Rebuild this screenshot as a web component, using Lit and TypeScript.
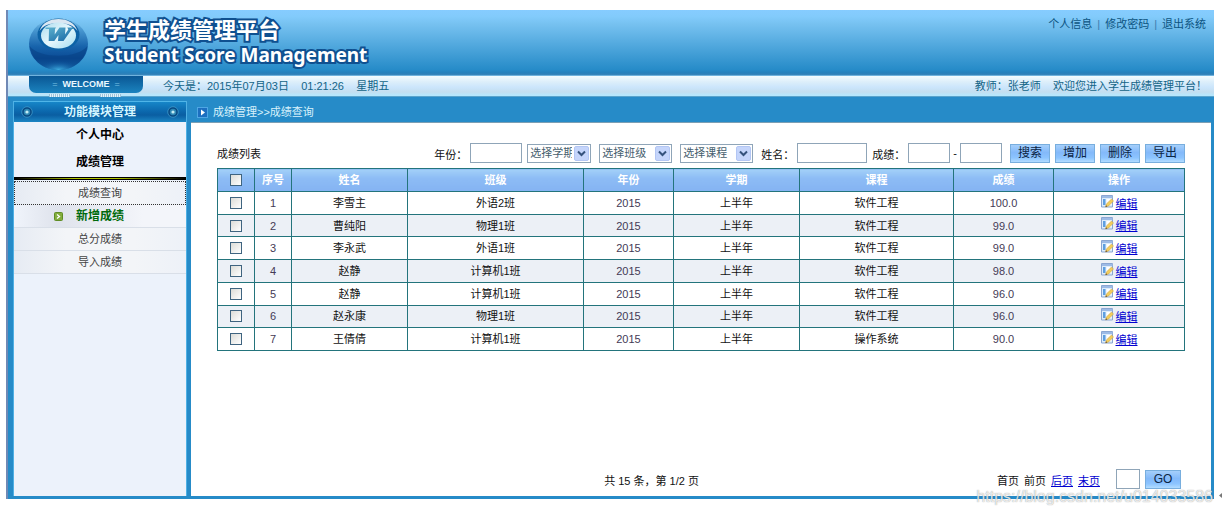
import { LitElement, html, css } from "lit";
import { customElement } from "lit/decorators.js";
import { classMap } from "lit/directives/class-map.js";

interface Score {
  name: string;
  group: string;
  course: string;
  score: string;
}

const SCORES: Score[] = [
  { name: "李雪主", group: "外语2班", course: "软件工程", score: "100.0" },
  { name: "曹纯阳", group: "物理1班", course: "软件工程", score: "99.0" },
  { name: "李永武", group: "外语1班", course: "软件工程", score: "99.0" },
  { name: "赵静", group: "计算机1班", course: "软件工程", score: "98.0" },
  { name: "赵静", group: "计算机1班", course: "软件工程", score: "96.0" },
  { name: "赵永康", group: "物理1班", course: "软件工程", score: "96.0" },
  { name: "王倩倩", group: "计算机1班", course: "操作系统", score: "90.0" },
];

const COLUMNS = ["序号", "姓名", "班级", "年份", "学期", "课程", "成绩", "操作"];

const logo = html`<svg class="logo" viewBox="0 0 60 54" aria-hidden="true">
  <defs>
    <linearGradient id="ball" x1="0" y1="0" x2="0" y2="1">
      <stop offset="0" stop-color="#8ccdf2" />
      <stop offset="0.2" stop-color="#4d9cd4" />
      <stop offset="0.55" stop-color="#1763ab" />
      <stop offset="0.78" stop-color="#0a4a94" />
      <stop offset="1" stop-color="#1f7fc2" />
    </linearGradient>
    <linearGradient id="face" x1="0" y1="0" x2="1" y2="1">
      <stop offset="0" stop-color="#a9dbee" />
      <stop offset="0.5" stop-color="#e8f8fd" />
      <stop offset="1" stop-color="#9fdcf0" />
    </linearGradient>
    <linearGradient id="letter" x1="0" y1="0" x2="1" y2="1">
      <stop offset="0" stop-color="#5fb4cf" />
      <stop offset="1" stop-color="#1464a4" />
    </linearGradient>
    <radialGradient id="glow" cx="0.5" cy="1" r="0.6">
      <stop offset="0" stop-color="#3fb0e2" />
      <stop offset="1" stop-color="#0b4f99" stop-opacity="0" />
    </radialGradient>
  </defs>
  <ellipse cx="30" cy="27" rx="29.5" ry="26" fill="url(#ball)" />
  <path d="M1 29c10 13 48 13 58 0-3 15-14 24-29 24S4 44 1 29z" fill="#083f84" opacity=".55" />
  <ellipse cx="30" cy="45" rx="18" ry="8" fill="url(#glow)" />
  <ellipse cx="30" cy="17.5" rx="21" ry="16" fill="#0c62a6" />
  <path d="M11 14C14 5 22 2 30 2s16 3 19 12C45 8 38 6 30 6s-15 2-19 8z" fill="#fff" opacity=".85" />
  <ellipse cx="30" cy="18.500" rx="17.500" ry="13" fill="url(#face)" />
  <path d="M17 10.500h10.500l-1 1.500-.3 5.500 4.800-7h6l-.5 7 3.300-5-1-2h7l-1 1.500h-1.300l-8.500 12h-5.500l.5-6-4.200 6h-5.600l.3-12h-3.500z" fill="url(#letter)" />
</svg>`;

const rivet = html`<svg class="rivet" viewBox="0 0 12 12" aria-hidden="true">
  <circle cx="6" cy="6" r="5.300" fill="#084a84" stroke="#3f9bcc" stroke-width=".8" />
  <circle cx="6" cy="6" r="3.200" fill="#2f88b4" />
  <circle cx="6" cy="6" r="1.600" fill="#c4ecf4" />
</svg>`;

const editIcon = html`<svg class="edit-icon" viewBox="0 0 13 13" aria-hidden="true">
  <path d="M.5 .5h11v11.500H.5z" fill="#dcecfb" stroke="#8aa6d2" />
  <path d="M1 1h10.500v2H1z" fill="#9dbbe6" />
  <path d="M2 4h2.500v6H2z" fill="#5f9fe0" />
  <path d="M5.500 4h5v6h-5z" fill="#fff" />
  <path d="M4.500 12l.8-3L10.500 4l2 2-5 5z" fill="#f3cd5c" stroke="#c79a3c" stroke-width=".5" />
  <path d="M4.500 12l.6-1.800 1.200 1.200z" fill="#5a4634" />
</svg>`;

@customElement("app-root")
export class AppRoot extends LitElement {
  static styles = css`
    :host {
      box-sizing: border-box;
      min-height: 100vh;
      padding: 10px 8px 16px 6px;
      background: #fff;
      color: #111;
      font: 11px/16px "Liberation Sans", "Noto Sans CJK SC", sans-serif;
      display: flex;
      flex-direction: column;
      position: relative;
    }
    * { box-sizing: border-box; }
    a { color: inherit; text-decoration: none; }
    .frame {
      flex: 1;
      display: flex;
      flex-direction: column;
      border-left: 2px solid #7089b5;
      background: #268bc8;
    }
    .banner {
      height: 65px;
      display: flex;
      padding: 6px 8px 0 20px;
      background: linear-gradient(#86ccff 0, #82cbfb 10%, #76c1f0 22%, #268bc8 92%, #2680bb 97%, #3b86ba);
    }
    .logo { width: 61px; height: 54px; margin-top: 1px; }
    .titles { flex: 1; margin: 4px 0 0 15px; color: #fff; }
    .titles h1, .titles p {
      margin: 0;
      font-weight: 700;
      -webkit-text-stroke: 4px #0f5090;
      paint-order: stroke fill;
      white-space: nowrap;
    }
    .titles h1 { font-size: 22px; line-height: 22px; font-family: "Liberation Sans", "Noto Sans CJK SC", sans-serif; }
    .titles p { font-size: 19px; line-height: 26px; font-family: "Noto Sans", sans-serif; }
    .account { color: #0c5482; white-space: nowrap; }
    .account span { padding: 0 5px; color: #3a7cae; }
    .welcome-bar {
      height: 22px;
      display: flex;
      align-items: flex-start;
      padding: 0 7px 0 21px;
      border-top: 1px solid #70b3de;
      border-bottom: 1px solid #5aa3cc;
      background: linear-gradient(#f4fcff, #dceefa 30%, #cce6fc 55%, #c3def0 80%, #b4e8ff);
      color: #136487;
    }
    .tab {
      width: 114px;
      height: 21px;
      margin-right: 20px;
      display: flex;
      flex-direction: column;
    }
    .tab-face {
      height: 17px;
      border-radius: 0 0 7px 7px;
      background: linear-gradient(#0a5794, #1b83bf);
      color: #eaf8ff;
      font-size: 9px;
      font-weight: 700;
      line-height: 16px;
      text-align: center;
    }
    .tab-face i { padding: 0 5px; color: #7cc3e6; font-style: normal; font-weight: 400; }
    .ticks { display: flex; justify-content: space-between; padding: 1px 22px 0 20px; }
    .ticks i { width: 21px; height: 3px; background: repeating-linear-gradient(90deg, #9ec3da 0 1px, #e4f3fb 1px 2px); }
    .today { flex: 1; padding-top: 2px; white-space: pre; }
    .greeting { padding-top: 2px; white-space: pre; }
    .body { flex: 1; display: flex; padding: 0 3px 3px 5px; gap: 4px; }
    .sidebar {
      width: 174px;
      margin-top: 4px;
      border: 1px solid #4fb0e4;
      border-width: 0 1px;
      background: #ecf2fb;
    }
    .side-title {
      height: 21px;
      display: flex;
      align-items: center;
      justify-content: space-between;
      padding: 0 7px;
      border-top: 1px solid #4fb5e8;
      background: linear-gradient(#1686c8, #0b66ab 50%, #0a5ea2 65%, #1c86c4);
      color: #d6f6ff;
      line-height: 18px;
    }
    .side-title h2 { margin: 0; font-size: 12px; }
    .rivet { width: 12px; height: 12px; }
    .side-group {
      display: block;
      height: 27px;
      color: #000;
      font-size: 12px;
      font-weight: 700;
      line-height: 27px;
      text-align: center;
    }
    .submenu {
      margin: 1px 0 0;
      padding: 4px 0 0;
      list-style: none;
      background: linear-gradient(90deg, #000, #b4c800 35%, #b4c800 60%, #000) 0 1px / 100% 1px no-repeat,
        linear-gradient(#000, #000) 0 0 / 100% 3px no-repeat;
    }
    .submenu a {
      display: flex;
      align-items: center;
      justify-content: center;
      height: 23px;
      border-bottom: 1px solid #d9dfe8;
      background: linear-gradient(90deg, #e6ebf3, #f3f5f8 30%, #f3f5f8 70%, #edf1f8);
      color: #444;
    }
    .submenu .focused { height: 24px; border: 1px dotted #333; }
    .submenu .current {
      background: linear-gradient(90deg, #f0f4fb, #dfe3ec 25%, #f3f5fa 75%);
      color: #006a0c;
      font-size: 12px;
      font-weight: 700;
    }
    .marker { width: 9px; height: 9px; margin: 1px 13px 0 -22px; }
    .content { flex: 1; min-width: 0; display: flex; flex-direction: column; }
    .crumbs { height: 25px; display: flex; align-items: center; gap: 5px; padding: 4px 0 0 6px; color: #d8f2fc; }
    .crumbs svg { width: 11px; height: 11px; margin-top: 1px; }
    .panel {
      flex: 1;
      display: flex;
      flex-direction: column;
      padding: 20px 26px 7px;
      border-top: 1px solid #7c9fb4;
      background: #fff;
    }
    .filters { display: flex; align-items: center; height: 20px; margin-bottom: 5px; white-space: nowrap; }
    .filters h3 { flex: 1; margin: 0; padding-top: 2px; font-size: 11px; font-weight: 400; }
    .fields { display: flex; align-items: center; gap: 8px; }
    .pair { display: flex; align-items: center; gap: 5px; }
    .field { display: flex; align-items: center; gap: 3px; }
    .field label { padding-top: 3px; }
    .range { display: flex; align-items: center; gap: 3px; }
    input[type="text"] {
      height: 20px;
      padding: 0 3px;
      border: 1px solid #8fa5b8;
      border-radius: 0;
      background: #fff;
      font: inherit;
      outline: 0;
    }
    .w-year { width: 52px; }
    .w-name { width: 70px; }
    .w-score { width: 42px; }
    .w-page { width: 24px; }
    .select { position: relative; display: flex; }
    select {
      appearance: none;
      width: 73px;
      height: 19px;
      padding: 0 18px 0 2px;
      border: 1px solid #8fa5b8;
      border-radius: 0;
      background: #fff;
      color: #46606e;
      font: inherit;
    }
    .short select { width: 64px; }
    .select svg { position: absolute; top: 2px; right: 2px; width: 15px; height: 15px; pointer-events: none; }
    .buttons { display: flex; gap: 5px; }
    button {
      width: 40px;
      height: 19px;
      padding: 0;
      border: 1px solid #78aede;
      background: linear-gradient(#a5cffb, #83b9fa 45%, #8cc4ff 75%, #b2dcff);
      color: #0b2544;
      font: inherit;
      font-size: 12px;
      line-height: 16px;
    }
    .go { width: 36px; }
    table { width: 100%; height: 183px; border-collapse: collapse; table-layout: fixed; }
    th, td { height: 22px; padding: 0; border: 1px solid #23747c; line-height: 16px; text-align: center; vertical-align: middle; }
    th { height: 23px; background: linear-gradient(#a3d0f8, #8dbcf5 40%, #84b3f2); color: #fff; }
    tbody tr:nth-child(even) { background: #ecf0f6; }
    .num { color: #443a55; }
    .c-tick { width: 37px; }
    .c-name { width: 116px; }
    .c-group { width: 176px; }
    .c-year { width: 90px; }
    .c-term { width: 126px; }
    .c-course { width: 154px; }
    .c-score { width: 100px; }
    .c-action { width: 131px; }
    input[type="checkbox"] {
      appearance: none;
      display: block;
      width: 12px;
      height: 12px;
      margin: 0 auto;
      border: 1px solid #3f6480;
      background: linear-gradient(135deg, #dcdcd7, #fff);
    }
    .edit { display: inline-flex; align-items: flex-end; gap: 2px; color: #0000d0; vertical-align: middle; }
    .edit span { text-decoration: underline; }
    .edit-icon { width: 13px; height: 13px; margin-bottom: 4px; }
    .pager {
      display: flex;
      align-items: center;
      justify-content: space-between;
      margin-top: auto;
      padding: 0 4px 0 40%;
    }
    .pages { display: flex; align-items: center; gap: 5px; }
    .pages .link { color: #0000d0; text-decoration: underline; }
    .pages input { margin-left: 11px; }
    .pages span, .pages a, .total { padding-top: 3px; }
    .mark {
      position: absolute;
      right: 9px;
      bottom: 8px;
      color: rgba(255, 255, 255, 0.8);
      font: 16px/20px "Liberation Sans", sans-serif;
      text-shadow: 0 0 1px rgba(90, 90, 90, 0.7);
      pointer-events: none;
    }
    .return { position: absolute; right: 0; bottom: 17px; width: 3px; height: 5px; }
  `;

  private picker(id: string, label: string, short = false) {
    return html`<div class=${classMap({ select: true, short })}>
      <select id=${id} aria-label=${label}><option>${label}</option></select>
      <svg viewBox="0 0 15 15" aria-hidden="true">
        <rect x=".5" y=".5" width="14" height="14" rx="1.500" fill="#c5d5fb" stroke="#b3c6f4" />
        <path d="M4 5.500l3.500 3.500L11 5.500" fill="none" stroke="#35527c" stroke-width="2" />
      </svg>
    </div>`;
  }

  private row(s: Score, i: number) {
    return html`<tr>
      <td><input type="checkbox" aria-label=${s.name} /></td>
      <td class="num">${i + 1}</td>
      <td>${s.name}</td>
      <td>${s.group}</td>
      <td class="num">2015</td>
      <td>上半年</td>
      <td>${s.course}</td>
      <td class="num">${s.score}</td>
      <td><a class="edit" href="#edit">${editIcon}<span>编辑</span></a></td>
    </tr>`;
  }

  render() {
    return html`
      <div class="frame">
        <header class="banner">
          ${logo}
          <div class="titles">
            <h1>学生成绩管理平台</h1>
            <p>Student Score Management</p>
          </div>
          <nav class="account">
            <a href="#me">个人信息</a><span>|</span><a href="#password">修改密码</a><span>|</span><a href="#exit">退出系统</a>
          </nav>
        </header>
        <div class="welcome-bar">
          <div class="tab">
            <div class="tab-face"><i>=</i>WELCOME<i>=</i></div>
            <div class="ticks"><i></i><i></i></div>
          </div>
          <div class="today">今天是：2015年07月03日    01:21:26    星期五</div>
          <div class="greeting">教师：张老师    欢迎您进入学生成绩管理平台！</div>
        </div>
        <div class="body">
          <aside class="sidebar">
            <div class="side-title">${rivet}<h2>功能模块管理</h2>${rivet}</div>
            <a class="side-group" href="#center">个人中心</a>
            <a class="side-group" href="#scores">成绩管理</a>
            <ul class="submenu">
              <li><a class="focused" href="#query">成绩查询</a></li>
              <li>
                <a class="current" href="#add"><svg class="marker" viewBox="0 0 9 9" aria-hidden="true">
                  <rect x=".5" y=".5" width="8" height="8" rx="1" fill="#83ad3c" stroke="#5f8c24" />
                  <path d="M3 2.500l2.500 2-2.500 2" fill="none" stroke="#fff" stroke-width="1.300" />
                </svg>新增成绩</a>
              </li>
              <li><a href="#total">总分成绩</a></li>
              <li><a href="#import">导入成绩</a></li>
            </ul>
          </aside>
          <main class="content">
            <div class="crumbs">
              <svg viewBox="0 0 11 11" aria-hidden="true">
                <rect x=".5" y=".5" width="10" height="10" fill="#1c6fc0" stroke="#4ea6e4" />
                <path d="M4 2.500v6l4-3z" fill="#fff" />
              </svg>
              成绩管理>>成绩查询
            </div>
            <section class="panel">
              <div class="filters">
                <h3>成绩列表</h3>
                <div class="fields">
                  <div class="pair">
                    <div class="field"><label for="year">年份：</label><input class="w-year" id="year" type="text" /></div>
                    ${this.picker("term", "选择学期", true)}
                  </div>
                  ${this.picker("group", "选择班级")}
                  ${this.picker("course", "选择课程")}
                  <div class="pair">
                    <div class="field"><label for="name">姓名：</label><input class="w-name" id="name" type="text" /></div>
                    <div class="field">
                      <label for="low">成绩：</label>
                      <div class="range">
                        <input class="w-score" id="low" type="text" /><span>-</span><input class="w-score" type="text" aria-label="最高成绩" />
                      </div>
                    </div>
                  </div>
                  <div class="buttons">
                    <button>搜索</button><button>增加</button><button>删除</button><button>导出</button>
                  </div>
                </div>
              </div>
              <table>
                <colgroup>
                  <col class="c-tick" /><col class="c-tick" /><col class="c-name" /><col class="c-group" /><col class="c-year" />
                  <col class="c-term" /><col class="c-course" /><col class="c-score" /><col class="c-action" />
                </colgroup>
                <thead>
                  <tr>
                    <th><input type="checkbox" aria-label="全选" /></th>
                    ${COLUMNS.map((c) => html`<th>${c}</th>`)}
                  </tr>
                </thead>
                <tbody>${SCORES.map((s, i) => this.row(s, i))}</tbody>
              </table>
              <div class="pager">
                <span class="total">共 15 条，第 1/2 页</span>
                <div class="pages">
                  <span>首页</span><span>前页</span><a class="link" href="#next">后页</a><a class="link" href="#last">末页</a>
                  <input class="w-page" type="text" aria-label="页码" /><button class="go">GO</button>
                </div>
              </div>
            </section>
          </main>
        </div>
      </div>
      <div class="mark">https://blog.csdn.net/u014033586</div>
      <svg class="return" viewBox="0 0 3 5" aria-hidden="true"><path d="M3 0v5L0 2.500z" fill="#777" /></svg>
    `;
  }
}
